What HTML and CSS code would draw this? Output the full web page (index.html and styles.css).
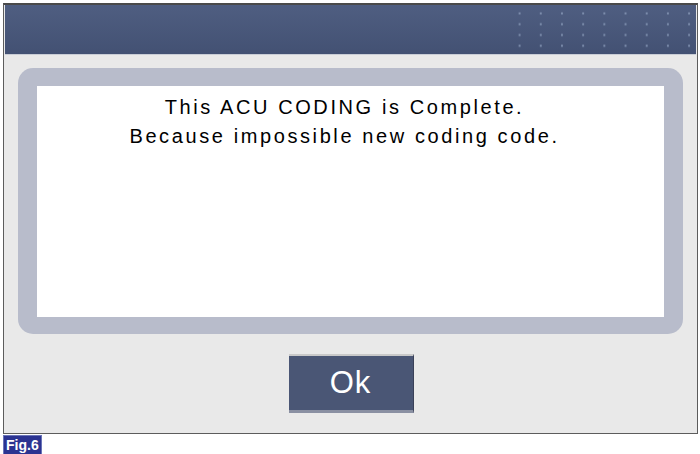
FILE: index.html
```html
<!DOCTYPE html>
<html>
<head>
<meta charset="utf-8">
<link rel="stylesheet" href="styles.css">
</head>
<body>
<div class="frame">
  <div class="header"><div class="dots"></div></div>
  <div class="panel">
    <div class="message">
      <p>This ACU CODING is Complete.</p>
      <p>Because impossible new coding code.</p>
    </div>
  </div>
  <div class="actions">
    <button class="ok">Ok</button>
  </div>
</div>
<div class="fig">Fig.6</div>
</body>
</html>
```
FILE: styles.css
```css
html, body {
  margin: 0;
  padding: 0;
  background: #ffffff;
}
body {
  padding: 3px 0 0 3px;
  font-family: "Liberation Sans", Arial, sans-serif;
}
.frame {
  box-sizing: border-box;
  width: 695px;
  height: 431px;
  border: 1px solid #5c5c5c;
  border-top: 2px solid #4a4a4a;
  background: #e9e9e9;
  padding: 0 1px;
  display: flex;
  flex-direction: column;
}
.header {
  height: 49px;
  flex: none;
  background: linear-gradient(#4f5e81, #435173);
  display: flex;
  justify-content: flex-end;
  border-bottom: 1px solid #c9cdd6;
}
.dots {
  width: 190px;
  height: 46px;
  margin-top: 3px;
  background-image: radial-gradient(circle, #7e8fae 0.9px, transparent 1.3px);
  background-size: 21.2px 10.8px;
  background-position: 3px 0;
}
.panel {
  margin: 13px 13px 0 13px;
  height: 266px;
  box-sizing: border-box;
  background: #b8bccb;
  border-radius: 15px;
  padding: 18px 19px 17px 19px;
  display: flex;
}
.message {
  flex: 1;
  background: #ffffff;
  padding: 7px 12px 0 0;
  text-align: center;
  font-family: "Liberation Sans", Arial, sans-serif;
  font-size: 20px;
  letter-spacing: 2.6px;
  color: #000;
}
.message p {
  margin: 0;
  line-height: 29px;
}
.actions {
  display: flex;
  justify-content: center;
  padding-top: 20px;
}
.ok {
  width: 125px;
  height: 59px;
  margin-left: 1px;
  background: #4a5675;
  border: none;
  border-top: 2px solid #c9c9c9;
  border-bottom: 3px solid #8a90a2;
  border-right: 1px solid #3a4158;
  color: #ffffff;
  font-family: "Liberation Sans", Arial, sans-serif;
  font-size: 31px;
  padding: 0;
  letter-spacing: 1px;
}
.fig {
  display: inline-block;
  margin-top: 1px;
  background: #2b3391;
  color: #ffffff;
  font-family: "Liberation Sans", Arial, sans-serif;
  font-weight: bold;
  font-size: 14px;
  line-height: 18px;
  padding: 0 2px 0 2px;
  border: 1px solid #6a74b8;
}
```
